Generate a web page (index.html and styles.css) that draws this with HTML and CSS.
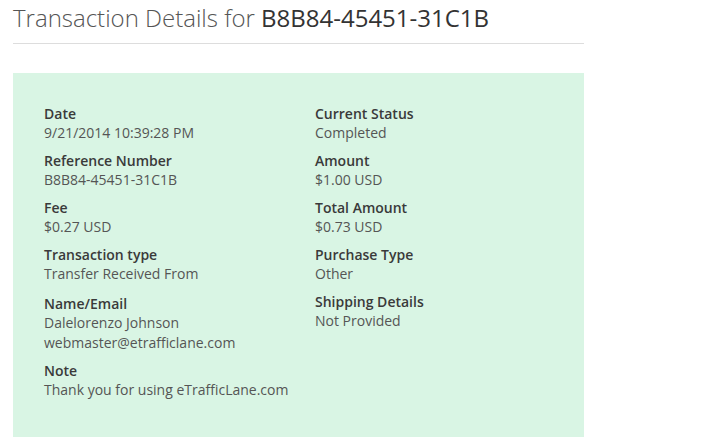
FILE: index.html
```html
<!DOCTYPE html>
<html lang="en">
<head>
    <meta charset="UTF-8">
    <title>Transaction Details</title>
    <link rel="stylesheet" href="styles.css">
</head>
<body>
    <div class="page">
        <h1 class="title">Transaction Details for <span class="txn-id">B8B84-45451-31C1B</span></h1>

        <div class="details">
            <div class="col">
                <div class="item">
                    <div class="label">Date</div>
                    <div class="value">9/21/2014 10:39:28 PM</div>
                </div>
                <div class="item">
                    <div class="label">Reference Number</div>
                    <div class="value">B8B84-45451-31C1B</div>
                </div>
                <div class="item">
                    <div class="label">Fee</div>
                    <div class="value">$0.27 USD</div>
                </div>
                <div class="item">
                    <div class="label">Transaction type</div>
                    <div class="value">Transfer Received From</div>
                </div>
                <div class="item multi">
                    <div class="label">Name/Email</div>
                    <div class="value">Dalelorenzo Johnson</div>
                    <div class="value">webmaster@etrafficlane.com</div>
                </div>
                <div class="item">
                    <div class="label">Note</div>
                    <div class="value">Thank you for using eTrafficLane.com</div>
                </div>
            </div>
            <div class="col">
                <div class="item">
                    <div class="label">Current Status</div>
                    <div class="value">Completed</div>
                </div>
                <div class="item">
                    <div class="label">Amount</div>
                    <div class="value">$1.00 USD</div>
                </div>
                <div class="item">
                    <div class="label">Total Amount</div>
                    <div class="value">$0.73 USD</div>
                </div>
                <div class="item">
                    <div class="label">Purchase Type</div>
                    <div class="value">Other</div>
                </div>
                <div class="item">
                    <div class="label">Shipping Details</div>
                    <div class="value">Not Provided</div>
                </div>
            </div>
        </div>
    </div>
</body>
</html>
```

FILE: styles.css
```css
body {
    font-family: "Open Sans", Arial, sans-serif;
    background-color: #ffffff;
    color: #333333;
    margin: 0;
    padding: 0;
}

.page {
    width: 571px;
    margin-left: 13px;
}

.title {
    font-size: 24px;
    font-weight: 300;
    color: #555555;
    line-height: 34px;
    margin: 1px 0 0 0;
    padding-bottom: 8px;
    border-bottom: 1px solid #dddddd;
}

.txn-id {
    font-weight: 400;
    color: #333333;
}

.details {
    margin-top: 29px;
    background-color: #d9f5e4;
    padding: 31px 31px 34px 31px;
    display: grid;
    grid-template-columns: 271px 1fr;
}

.item {
    margin-bottom: 9px;
}

.item.multi {
    padding-top: 2px;
    margin-bottom: 8px;
}

.label {
    font-size: 14px;
    font-weight: 600;
    line-height: 19px;
    color: #3a3a3a;
}

.value {
    font-size: 14px;
    line-height: 19px;
    color: #555555;
}

.multi .value {
    line-height: 20px;
}
```
